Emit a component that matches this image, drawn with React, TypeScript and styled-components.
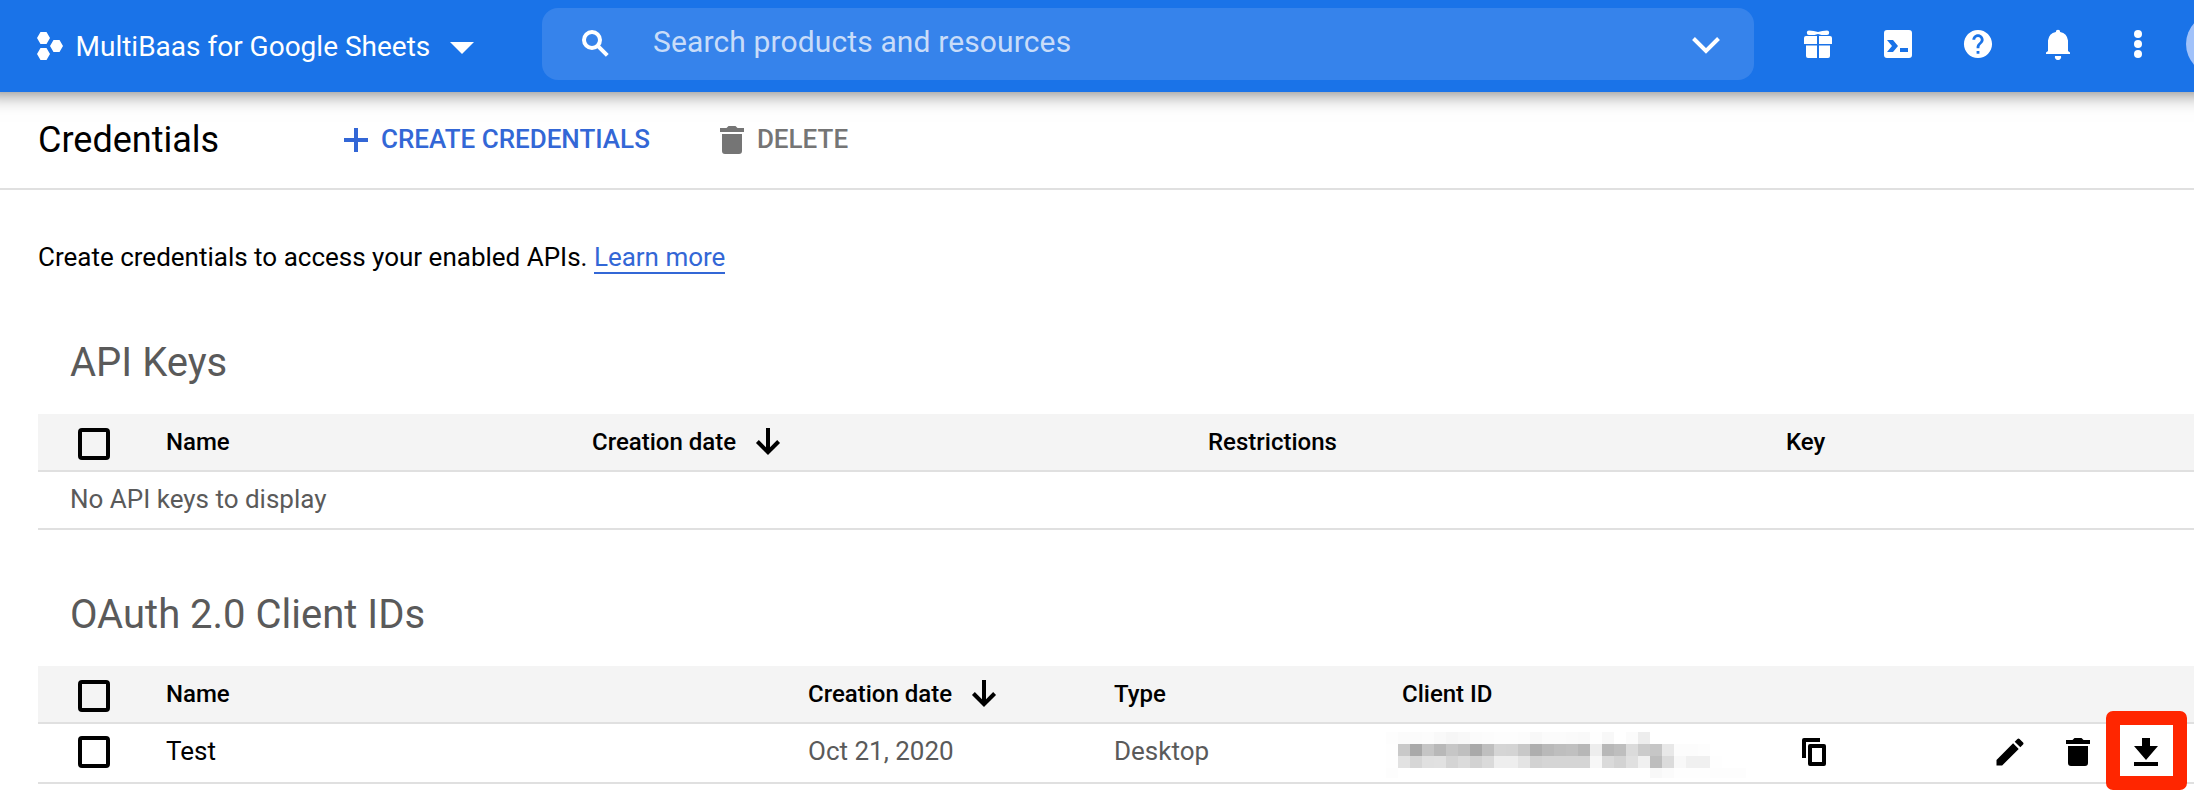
import React from "react";
import styled, { createGlobalStyle, css } from "styled-components";

const GlobalStyle = createGlobalStyle`
  * { box-sizing: border-box; }
  body {
    margin: 0;
    background: #fff;
    color: #000;
    font-family: Roboto, "Liberation Sans", sans-serif;
    overflow: hidden;
  }
`;

const Page = styled.div`
  width: 2194px;
  height: 792px;
  overflow: hidden;
  background: #fff;
`;

const TopBar = styled.header`
  display: flex;
  align-items: flex-start;
  height: 92px;
  background: #1a73e8;
  color: #fff;
  box-shadow: 0 -20px 20px 20px rgba(0, 0, 0, 0.6);
`;

const Project = styled.div`
  display: flex;
  flex: none;
  align-items: center;
  width: 542px;
  height: 92px;
  padding-left: 37px;
`;

const ProjectName = styled.span`
  margin-left: 12.5px;
  padding-top: 1px;
  font-size: 28px;
  line-height: 36px;
  white-space: nowrap;
`;

const Caret = styled.span`
  width: 0;
  height: 0;
  margin: 4px 0 0 20px;
  border: 12px solid transparent;
  border-top-color: #fff;
  border-bottom: 0;
`;

const SearchBox = styled.div`
  display: flex;
  flex: none;
  align-items: center;
  width: 1212px;
  height: 72px;
  margin-top: 8px;
  padding: 0 30px 0 34px;
  border-radius: 16px;
  background: #3683eb;
`;

const SearchHint = styled.span`
  flex: 1;
  margin: -4px 0 0 41px;
  color: #c8dcf9;
  font-size: 30px;
  line-height: 36px;
  letter-spacing: 0.13px;
`;

const Tools = styled.div`
  display: flex;
  flex: none;
  align-items: center;
  gap: 44px;
  height: 88px;
  padding-left: 46px;
`;

const Avatar = styled.span`
  flex: none;
  width: 62px;
  height: 62px;
  margin-left: -14px;
  border-radius: 50%;
  background: #a1c2fa;
`;

const Icon = styled.svg<{ $size?: number }>`
  flex: none;
  display: block;
  width: ${(p) => p.$size ?? 36}px;
  height: ${(p) => p.$size ?? 36}px;
  fill: currentColor;
`;

const LineIcon = styled(Icon)`
  fill: none;
  stroke: currentColor;
  stroke-width: 4;
`;

const ProjectMark = styled(Icon)`
  width: 26px;
  height: 28px;
`;

const ActionBar = styled.div`
  display: flex;
  align-items: center;
  height: 98px;
  padding-left: 38px;
  border-bottom: 2px solid #e0e0e0;
`;

const Title = styled.h1`
  width: 300px;
  margin: 0;
  font-size: 36px;
  font-weight: 400;
  line-height: 48px;
`;

const Action = styled.button<{ $muted?: boolean }>`
  display: flex;
  align-items: center;
  gap: 7px;
  margin: 0 ${(p) => (p.$muted ? 0 : 64)}px 0 0;
  padding: 0;
  border: 0;
  background: none;
  color: ${(p) => (p.$muted ? "#757575" : "#3367d6")};
  font: 500 26px/36px Roboto, "Liberation Sans", sans-serif;
`;

const ActionLabel = styled.span`
  padding-bottom: 2px;
`;

const Content = styled.main`
  padding-left: 38px;
`;

const Intro = styled.p`
  margin: 0;
  padding-top: 48px;
  height: 142px;
  font-size: 26px;
  line-height: 38px;
`;

const Link = styled.a`
  color: #3367d6;
  border-bottom: 2px solid #3367d6;
`;

const Section = styled.section`
  margin-bottom: 54px;
`;

const SectionTitle = styled.h2`
  height: 82px;
  margin: 0;
  padding-left: 32px;
  color: #5a5a5a;
  font-size: 40px;
  font-weight: 400;
  line-height: 62px;
`;

const Cell = styled.div<{ $strong?: boolean }>`
  display: flex;
  align-items: center;
  padding-bottom: 2px;
  ${(p) => p.$strong && "color: #000;"}
`;

const Checkbox = styled.span`
  width: 32px;
  height: 32px;
  margin-left: 40px;
  border: 4px solid #000;
  border-radius: 4px;
`;

const Row = styled.div<{ $columns: string }>`
  display: grid;
  grid-template-columns: ${(p) => p.$columns};
  align-items: center;
  height: 58px;
  border-bottom: 2px solid #e0e0e0;
  color: #5a5a5a;
  font-size: 26px;
  line-height: 36px;
  white-space: nowrap;
`;

const HeadRow = styled(Row)`
  background: #f4f4f4;
  color: #000;
  font-size: 24px;
  font-weight: 500;

  ${Cell} {
    padding-bottom: 0;
  }

  ${Checkbox} {
    margin-top: 4px;
  }
`;

const ClientRow = styled(Row)`
  height: 60px;
  padding-bottom: 2px;
`;

const Empty = styled(Cell)`
  padding-left: 32px;
`;

const SortArrow = styled(LineIcon)`
  width: 40px;
  height: 40px;
  margin-left: 12px;
`;

const RowTools = styled.div`
  display: flex;
  align-items: center;
  color: #000;
`;

const ToolSlot = styled.span<{ $width: number }>`
  display: flex;
  width: ${(p) => p.$width}px;
`;

const Highlight = styled.span`
  display: flex;
  width: 81px;
  height: 79px;
  margin: -17px 0 -14px;
  padding: 9px 0 0 8px;
  border: 14px solid #ff2600;
  border-radius: 7px;
  background: #fff;
`;

const Masked = styled.div`
  display: grid;
  grid-template-columns: repeat(30, 12px);
  grid-template-rows: 12px 12px 12px 10px;
  width: 360px;
  margin: 6px 0 0 -16px;
`;

const MaskTile = styled.i<{ $shade: number }>`
  ${(p) => css`
    background: rgb(${p.$shade}, ${p.$shade}, ${p.$shade});
  `}
`;

const maskShades = [
  [253, 251, 251, 252, 249, 246, 248, 251, 252, 253, 253, 252, 248, 251, 251, 250, 249, 254, 248, 255, 251, 237, 255, 255, 255, 255, 255, 255, 255, 255],
  [254, 201, 169, 197, 184, 198, 191, 169, 191, 213, 212, 200, 174, 185, 190, 192, 183, 237, 184, 190, 219, 203, 198, 232, 252, 252, 253, 255, 255, 255],
  [254, 226, 214, 224, 225, 212, 219, 210, 218, 238, 238, 228, 210, 213, 213, 213, 213, 247, 218, 211, 224, 240, 189, 219, 248, 240, 240, 254, 255, 255],
  [253, 255, 255, 255, 255, 255, 255, 255, 255, 255, 255, 255, 255, 255, 255, 255, 255, 255, 255, 255, 255, 255, 248, 251, 254, 254, 254, 253, 253, 253],
];

const keyColumns = "128px 426px 616px 578px 1fr";
const clientColumns = "128px 642px 306px 288px 396px 1fr";

const Trash = () => (
  <Icon viewBox="0 0 36 36">
    <path d="M14.500 4h7l2 2H30v4H6V6h6.500zM8 12h20v17a3 3 0 01-3 3H11a3 3 0 01-3-3z" />
  </Icon>
);

const Sort = () => (
  <SortArrow viewBox="0 0 40 40">
    <path d="M20 6v24M9.400 19.500L20 30.200l10.600-10.700" />
  </SortArrow>
);

export default function App() {
  return (
    <Page>
      <GlobalStyle />
      <TopBar>
        <Project>
          <ProjectMark viewBox="0 0 26 28">
            <path d="M3.500 0h6L13 6l-3.500 6h-6L0 6zM3.500 16h6l3.500 6-3.500 6h-6L0 22zM16.500 8h6l3.500 6-3.500 6h-6L13 14z" />
          </ProjectMark>
          <ProjectName>MultiBaas for Google Sheets</ProjectName>
          <Caret />
        </Project>
        <SearchBox>
          <LineIcon viewBox="0 0 36 36">
            <circle cx="16" cy="14" r="8" />
            <path d="M21.300 19.300l10 10" />
          </LineIcon>
          <SearchHint>Search products and resources</SearchHint>
          <LineIcon viewBox="0 0 36 36">
            <path d="M5.500 12.500L18 25l12.500-12.500" />
          </LineIcon>
        </SearchBox>
        <Tools>
          <Icon viewBox="0 0 36 36">
            <path d="M9 4.500q5 0 9 1.500 4-1.500 9-1.500a2.200 2.200 0 010 4.400h-5.500L18 8l-3.500.9H9a2.200 2.200 0 010-4.400zM6 10h11v8H4v-6a2 2 0 012-2zm13 0h11a2 2 0 012 2v6H19zM6 19.500h11V32H8a2 2 0 01-2-2zm13 0h11V30a2 2 0 01-2 2h-9z" />
          </Icon>
          <Icon viewBox="0 0 36 36">
            <path
              fillRule="evenodd"
              d="M7 4h22a3 3 0 013 3v22a3 3 0 01-3 3H7a3 3 0 01-3-3V7a3 3 0 013-3zM7 14l5 6-5 6h6l5-6-5-6zM20 22v4h8v-4z"
            />
          </Icon>
          <Icon viewBox="-0.8 -0.8 25.6 25.6">
            <path d="M12 2C6.480 2 2 6.480 2 12s4.480 10 10 10 10-4.480 10-10S17.520 2 12 2zm1 17h-2v-2h2v2zm2.070-7.750l-.9.920C13.450 12.900 13 13.500 13 15h-2v-.5c0-1.100.450-2.100 1.170-2.830l1.240-1.260c.370-.360.590-.860.590-1.410 0-1.100-.9-2-2-2s-2 .9-2 2H8c0-2.210 1.790-4 4-4s4 1.790 4 4c0 .880-.360 1.680-.930 2.250z" />
          </Icon>
          <Icon viewBox="0 0 36 36">
            <path d="M18 34a3 3 0 003-4h-6a3 3 0 003 4zM28 25V14.500a10 10 0 00-7.800-8.500 2.200 2.200 0 00-4.400 0A10 10 0 008 14.500V25l-2 1.500V28h24v-1.500z" />
          </Icon>
          <Icon viewBox="0 0 36 36">
            <circle cx="18" cy="8" r="4" />
            <circle cx="18" cy="18" r="4" />
            <circle cx="18" cy="28" r="4" />
          </Icon>
          <Avatar />
        </Tools>
      </TopBar>
      <ActionBar>
        <Title>Credentials</Title>
        <Action>
          <LineIcon viewBox="0 0 36 36">
            <path d="M18 6v24M6 18h24" />
          </LineIcon>
          <ActionLabel>CREATE CREDENTIALS</ActionLabel>
        </Action>
        <Action $muted>
          <Trash />
          <ActionLabel>DELETE</ActionLabel>
        </Action>
      </ActionBar>
      <Content>
        <Intro>
          Create credentials to access your enabled APIs. <Link>Learn more</Link>
        </Intro>
        <Section>
          <SectionTitle>API Keys</SectionTitle>
          <HeadRow $columns={keyColumns}>
            <Checkbox />
            <Cell>Name</Cell>
            <Cell>
              Creation date
              <Sort />
            </Cell>
            <Cell>Restrictions</Cell>
            <Cell>Key</Cell>
          </HeadRow>
          <Row $columns="1fr">
            <Empty>No API keys to display</Empty>
          </Row>
        </Section>
        <Section>
          <SectionTitle>OAuth 2.0 Client IDs</SectionTitle>
          <HeadRow $columns={clientColumns}>
            <Checkbox />
            <Cell>Name</Cell>
            <Cell>
              Creation date
              <Sort />
            </Cell>
            <Cell>Type</Cell>
            <Cell>Client ID</Cell>
          </HeadRow>
          <ClientRow $columns={clientColumns}>
            <Checkbox />
            <Cell $strong>Test</Cell>
            <Cell>Oct 21, 2020</Cell>
            <Cell>Desktop</Cell>
            <Masked>
              {maskShades.flatMap((line, y) =>
                line.map((shade, x) => <MaskTile key={`${y}-${x}`} $shade={shade} />)
              )}
            </Masked>
            <RowTools>
              <ToolSlot $width={194}>
                <Icon viewBox="0 0 32 32" $size={32}>
                  <path d="M6 2h16v4H8v16H4V4a2 2 0 012-2z" />
                  <path
                    fillRule="evenodd"
                    d="M12 8h14a2 2 0 012 2v18a2 2 0 01-2 2H12a2 2 0 01-2-2V10a2 2 0 012-2zm2 4v14h10V12z"
                  />
                </Icon>
              </ToolSlot>
              <ToolSlot $width={68}>
                <Icon viewBox="0 0 24 24">
                  <path d="M3 17.250V21h3.750L17.810 9.940l-3.750-3.750L3 17.250zM20.710 7.040c.390-.390.390-1.020 0-1.410l-2.340-2.340a.996.996 0 0 0-1.410 0l-1.830 1.830 3.750 3.750 1.830-1.830z" />
                </Icon>
              </ToolSlot>
              <ToolSlot $width={46}>
                <Trash />
              </ToolSlot>
              <Highlight>
                <Icon viewBox="0 0 36 36">
                  <path d="M14 4h8v8h8L18 26 6 12h8zM6 28h24v4H6z" />
                </Icon>
              </Highlight>
            </RowTools>
          </ClientRow>
        </Section>
      </Content>
    </Page>
  );
}
